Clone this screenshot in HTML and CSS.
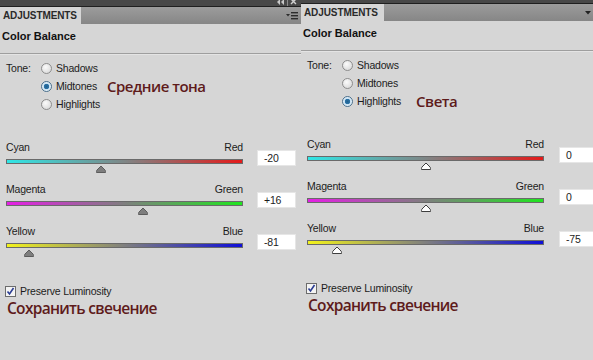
FILE: index.html
```html
<!DOCTYPE html>
<html lang="en">
<head>
    <meta charset="UTF-8">
    <title>Color Balance</title>
    <link rel="stylesheet" href="styles.css">
</head>
<body>

<div class="screen">

    <!-- Left panel: midtones -->
    <section class="panel panel--left">
        <div class="titlebar">
            <svg class="titlebar-icons" width="20" height="7" viewBox="0 0 20 7">
                <path d="M3 0 L0 3 L3 6 Z M7 0 L4 3 L7 6 Z" fill="#c8c8c8"/>
                <rect x="10" y="0" width="1" height="7" fill="#8a8a8a"/>
                <path d="M14 0 L19 5 M19 0 L14 5" stroke="#d0d0d0" stroke-width="1.4"/>
            </svg>
        </div>
        <div class="tabbar">
            <span class="tab">ADJUSTMENTS</span>
            <svg class="tab-menu" width="12" height="9" viewBox="0 0 12 9">
                <path d="M0 3 H4 L2 5.5 Z" fill="#2d2d2d"/>
                <rect x="5" y="1" width="7" height="1.4" fill="#2d2d2d"/>
                <rect x="5" y="4" width="7" height="1.4" fill="#2d2d2d"/>
                <rect x="5" y="7" width="7" height="1.4" fill="#2d2d2d"/>
            </svg>
        </div>
        <h1 class="panel-title">Color Balance</h1>
        <hr class="divider">

        <div class="tone">
            <span class="tone-label">Tone:</span>
            <ul class="tone-options">
                <li><span class="radio"></span>Shadows</li>
                <li class="is-checked"><span class="radio"></span>Midtones<span class="note">Средние тона</span></li>
                <li><span class="radio"></span>Highlights</li>
            </ul>
        </div>

        <div class="sliders">
            <div class="slider-row">
                <div class="slider">
                    <div class="slider-labels"><span>Cyan</span><span>Red</span></div>
                    <div class="slider-track track--cr">
                        <svg class="thumb" style="left: 40%" width="11" height="8" viewBox="0 0 11 8"><path d="M5.5 1 L9.5 5 Q10 5.5 10 6.5 V7.5 H1 V6.5 Q1 5.5 1.5 5 Z"/></svg>
                    </div>
                </div>
                <div class="slider-value">-20</div>
            </div>
            <div class="slider-row">
                <div class="slider">
                    <div class="slider-labels"><span>Magenta</span><span>Green</span></div>
                    <div class="slider-track track--mg">
                        <svg class="thumb" style="left: 58%" width="11" height="8" viewBox="0 0 11 8"><path d="M5.5 1 L9.5 5 Q10 5.5 10 6.5 V7.5 H1 V6.5 Q1 5.5 1.5 5 Z"/></svg>
                    </div>
                </div>
                <div class="slider-value">+16</div>
            </div>
            <div class="slider-row">
                <div class="slider">
                    <div class="slider-labels"><span>Yellow</span><span>Blue</span></div>
                    <div class="slider-track track--yb">
                        <svg class="thumb" style="left: 9.5%" width="11" height="8" viewBox="0 0 11 8"><path d="M5.5 1 L9.5 5 Q10 5.5 10 6.5 V7.5 H1 V6.5 Q1 5.5 1.5 5 Z"/></svg>
                    </div>
                </div>
                <div class="slider-value">-81</div>
            </div>
        </div>

        <label class="preserve">
            <svg class="checkbox" width="11" height="11" viewBox="0 0 11 11">
                <rect x="0.5" y="0.5" width="10" height="10" fill="#f4f4f4" stroke="#6c6c6c"/>
                <path d="M2.5 5.5 L4.5 8 L8.5 2" fill="none" stroke="#2b3d93" stroke-width="1.6"/>
            </svg>
            Preserve Luminosity
        </label>
        <p class="caption">Сохранить свечение</p>
    </section>

    <!-- Right panel: highlights -->
    <section class="panel panel--right">
        <div class="titlebar"></div>
        <div class="tabbar">
            <span class="tab">ADJUSTMENTS</span>
            <svg class="tab-menu" width="6" height="4" viewBox="0 0 6 4">
                <path d="M0 0 H6 L3 3.5 Z" fill="#222"/>
            </svg>
        </div>
        <h1 class="panel-title">Color Balance</h1>
        <hr class="divider">

        <div class="tone">
            <span class="tone-label">Tone:</span>
            <ul class="tone-options">
                <li><span class="radio"></span>Shadows</li>
                <li><span class="radio"></span>Midtones</li>
                <li class="is-checked"><span class="radio"></span>Highlights<span class="note note--wide">Света</span></li>
            </ul>
        </div>

        <div class="sliders">
            <div class="slider-row">
                <div class="slider">
                    <div class="slider-labels"><span>Cyan</span><span>Red</span></div>
                    <div class="slider-track track--cr">
                        <svg class="thumb" style="left: 50%" width="11" height="8" viewBox="0 0 11 8"><path d="M5.5 1 L9.5 5 Q10 5.5 10 6.5 V7.5 H1 V6.5 Q1 5.5 1.5 5 Z"/></svg>
                    </div>
                </div>
                <div class="slider-value">0</div>
            </div>
            <div class="slider-row">
                <div class="slider">
                    <div class="slider-labels"><span>Magenta</span><span>Green</span></div>
                    <div class="slider-track track--mg">
                        <svg class="thumb" style="left: 50%" width="11" height="8" viewBox="0 0 11 8"><path d="M5.5 1 L9.5 5 Q10 5.5 10 6.5 V7.5 H1 V6.5 Q1 5.5 1.5 5 Z"/></svg>
                    </div>
                </div>
                <div class="slider-value">0</div>
            </div>
            <div class="slider-row">
                <div class="slider">
                    <div class="slider-labels"><span>Yellow</span><span>Blue</span></div>
                    <div class="slider-track track--yb">
                        <svg class="thumb" style="left: 12.5%" width="11" height="8" viewBox="0 0 11 8"><path d="M5.5 1 L9.5 5 Q10 5.5 10 6.5 V7.5 H1 V6.5 Q1 5.5 1.5 5 Z"/></svg>
                    </div>
                </div>
                <div class="slider-value">-75</div>
            </div>
        </div>

        <label class="preserve">
            <svg class="checkbox" width="11" height="11" viewBox="0 0 11 11">
                <rect x="0.5" y="0.5" width="10" height="10" fill="#f4f4f4" stroke="#6c6c6c"/>
                <path d="M2.5 5.5 L4.5 8 L8.5 2" fill="none" stroke="#2b3d93" stroke-width="1.6"/>
            </svg>
            Preserve Luminosity
        </label>
        <p class="caption">Сохранить свечение</p>
    </section>

</div>

</body>
</html>
```

FILE: styles.css
```css
body {
    margin: 0;
    background: #d6d6d6;
    font-family: "Liberation Sans", Arial, sans-serif;
    font-size: 10.5px;
    letter-spacing: -0.2px;
    color: #1c1c1c;
}
.screen {
    display: flex;
    width: 593px;
    height: 360px;
    overflow: hidden;
}
.panel {
    flex: 0 0 auto;
    overflow: hidden;
    background: #d6d6d6;
}
.panel--left {
    width: 301px;
}
.panel--right {
    width: 292px;
}

/* Dark strip on top */
.titlebar {
    height: 6px;
    background: #484848;
    border-bottom: 1px solid #1f1f1f;
    display: flex;
    justify-content: flex-end;
    overflow: hidden;
}
.panel--right .titlebar {
    height: 3px;
}
.titlebar-icons {
    margin-right: 4px;
    margin-top: -1px;
}

/* Tab row */
.tabbar {
    height: 17px;
    display: flex;
    align-items: center;
    background: linear-gradient(#9c9c9c, #868686);
}
.tab {
    align-self: stretch;
    display: flex;
    align-items: center;
    width: 78px;
    padding-left: 3px;
    background: #d6d6d6;
    font-size: 10px;
    font-weight: bold;
    letter-spacing: -0.1px;
    color: #2a2a2a;
}
.panel--right .tab {
    width: 80px;
}
.tab-menu {
    margin-left: auto;
    margin-right: 3px;
}
.panel--right .tab-menu {
    margin-right: 2px;
}

.panel-title {
    margin: 4px 0 0 2px;
    font-size: 11px;
    line-height: 16px;
    font-weight: bold;
    letter-spacing: 0;
    color: #111;
}
.divider {
    margin: 9px 0 0;
    border: none;
    height: 1px;
    background: #9e9e9e;
    box-shadow: 0 1px 0 #e4e4e4;
}

/* Tone radios */
.tone {
    display: flex;
    margin-top: 5px;
    padding-left: 6px;
}
.tone-label {
    width: 35px;
    line-height: 18px;
}
.tone-options {
    list-style: none;
    margin: 0;
    padding: 0;
}
.tone-options li {
    display: flex;
    align-items: center;
    height: 18px;
}
.radio {
    width: 11px;
    height: 11px;
    margin-right: 4px;
    border: 1px solid #8d8d8d;
    border-radius: 50%;
    background: radial-gradient(circle at 40% 35%, #fbfbfb, #d2d2d2);
    box-sizing: border-box;
}
.is-checked .radio {
    border-color: #4a6f8c;
    background: radial-gradient(circle, #1f5f8e 0, #2d74a8 2.5px, #c9e2f3 3px, #eef6fb 5px);
}
.note {
    margin-left: 10px;
    font-family: "Open Sans", sans-serif;
    font-weight: 600;
    font-size: 15px;
    letter-spacing: -0.5px;
    color: #5e1b1b;
    line-height: 18px;
}
.note--wide {
    margin-left: 15px;
}

/* Sliders */
.sliders {
    margin-top: 28px;
    padding-left: 6px;
}
.slider-row {
    display: flex;
    height: 42px;
}
.slider {
    flex: 0 0 237px;
}
.slider-labels {
    display: flex;
    justify-content: space-between;
    line-height: 13px;
}
.slider-track {
    position: relative;
    height: 3px;
    margin-top: 5px;
    border: 1px solid #6a6a6a;
}
.track--cr {
    background: linear-gradient(to right, #30e6e6, #7f8686 50%, #e41a1a);
}
.track--mg {
    background: linear-gradient(to right, #e51fe5, #7f7f7f 50%, #1fe51f);
}
.track--yb {
    background: linear-gradient(to right, #f2f21c, #7f7f7f 50%, #0f0fd8);
}
.thumb {
    position: absolute;
    top: 5px;
    transform: translateX(-50%);
    fill: #7e7e7e;
    stroke: #5c5c5c;
}
.panel--right .thumb {
    fill: #ffffff;
    stroke: #3e3e3e;
}
.slider-value {
    flex: 0 0 39px;
    height: 16px;
    margin: 9px 0 0 14px;
    padding-left: 6px;
    background: #fff;
    border: 1px solid #e6e6e6;
    box-sizing: border-box;
    line-height: 14px;
}
.panel--right .slider-value {
    margin-left: 15px;
}

.preserve {
    display: flex;
    align-items: center;
    gap: 4px;
    margin-top: 17px;
    padding-left: 5px;
    height: 14px;
}
.caption {
    margin: 2px 0 0 7px;
    font-family: "Open Sans", sans-serif;
    font-weight: 600;
    font-size: 15.5px;
    letter-spacing: -0.7px;
    line-height: 16px;
    color: #5e1b1b;
}
```
